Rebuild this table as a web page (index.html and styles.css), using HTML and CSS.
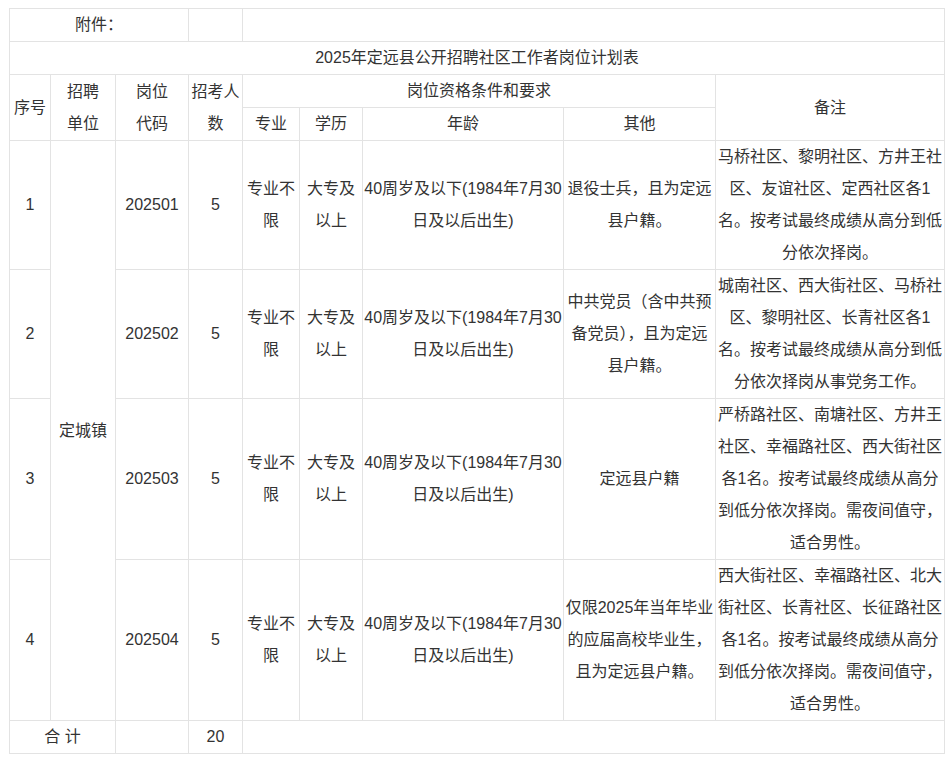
FILE: index.html
```html
<!DOCTYPE html>
<html lang="zh-CN">
<head>
<meta charset="utf-8">
<title>2025年定远县公开招聘社区工作者岗位计划表</title>
<link rel="stylesheet" href="styles.css">
</head>
<body>
<div class="page">
<table class="plan">
  <colgroup>
    <col class="c1"><col class="c2"><col class="c3"><col class="c4"><col class="c5">
    <col class="c6"><col class="c7"><col class="c8"><col class="c9">
  </colgroup>
  <tbody>
    <tr>
      <td colspan="3">附件：</td>
      <td></td>
      <td colspan="5"></td>
    </tr>
    <tr>
      <td colspan="9">2025年定远县公开招聘社区工作者岗位计划表</td>
    </tr>
    <tr>
      <td rowspan="2">序号</td>
      <td rowspan="2">招聘<br>单位</td>
      <td rowspan="2">岗位<br>代码</td>
      <td rowspan="2">招考人数</td>
      <td colspan="4">岗位资格条件和要求</td>
      <td rowspan="2">备注</td>
    </tr>
    <tr>
      <td>专业</td>
      <td>学历</td>
      <td>年龄</td>
      <td>其他</td>
    </tr>
    <tr>
      <td>1</td>
      <td rowspan="4">定城镇</td>
      <td>202501</td>
      <td>5</td>
      <td>专业不限</td>
      <td>大专及以上</td>
      <td>40周岁及以下(1984年7月30日及以后出生)</td>
      <td>退役士兵，且为定远县户籍。</td>
      <td>马桥社区、黎明社区、方井王社区、友谊社区、定西社区各1名。按考试最终成绩从高分到低分依次择岗。</td>
    </tr>
    <tr>
      <td>2</td>
      <td>202502</td>
      <td>5</td>
      <td>专业不限</td>
      <td>大专及以上</td>
      <td>40周岁及以下(1984年7月30日及以后出生)</td>
      <td>中共党员（含中共预备党员），且为定远县户籍。</td>
      <td>城南社区、西大街社区、马桥社区、黎明社区、长青社区各1名。按考试最终成绩从高分到低分依次择岗从事党务工作。</td>
    </tr>
    <tr>
      <td>3</td>
      <td>202503</td>
      <td>5</td>
      <td>专业不限</td>
      <td>大专及以上</td>
      <td>40周岁及以下(1984年7月30日及以后出生)</td>
      <td>定远县户籍</td>
      <td>严桥路社区、南塘社区、方井王社区、幸福路社区、西大街社区各1名。按考试最终成绩从高分到低分依次择岗。需夜间值守，适合男性。</td>
    </tr>
    <tr>
      <td>4</td>
      <td>202504</td>
      <td>5</td>
      <td>专业不限</td>
      <td>大专及以上</td>
      <td>40周岁及以下(1984年7月30日及以后出生)</td>
      <td>仅限2025年当年毕业的应届高校毕业生，且为定远县户籍。</td>
      <td>西大街社区、幸福路社区、北大街社区、长青社区、长征路社区各1名。按考试最终成绩从高分到低分依次择岗。需夜间值守，适合男性。</td>
    </tr>
    <tr>
      <td colspan="2">合 计</td>
      <td></td>
      <td>20</td>
      <td colspan="5"></td>
    </tr>
  </tbody>
</table>
</div>
</body>
</html>
```

FILE: styles.css
```css
html, body {
  margin: 0;
  padding: 0;
  background: #ffffff;
}

.page {
  padding: 8px 0 0 9px;
}

.plan {
  width: 935px;
  table-layout: fixed;
  border-collapse: collapse;
  font-family: "Liberation Sans", "Noto Sans CJK SC", sans-serif;
  font-size: 16px;
  line-height: 32px;
  color: #333333;
}

.plan td {
  border: 1px solid #e3e3e3;
  padding: 0 1px;
  text-align: center;
  vertical-align: middle;
  word-break: break-all;
  height: 32px;
}

.c1 { width: 41px; }
.c2 { width: 65px; }
.c3 { width: 73px; }
.c4 { width: 54px; }
.c5 { width: 57px; }
.c6 { width: 63px; }
.c7 { width: 201px; }
.c8 { width: 152px; }
.c9 { width: 229px; }
```
